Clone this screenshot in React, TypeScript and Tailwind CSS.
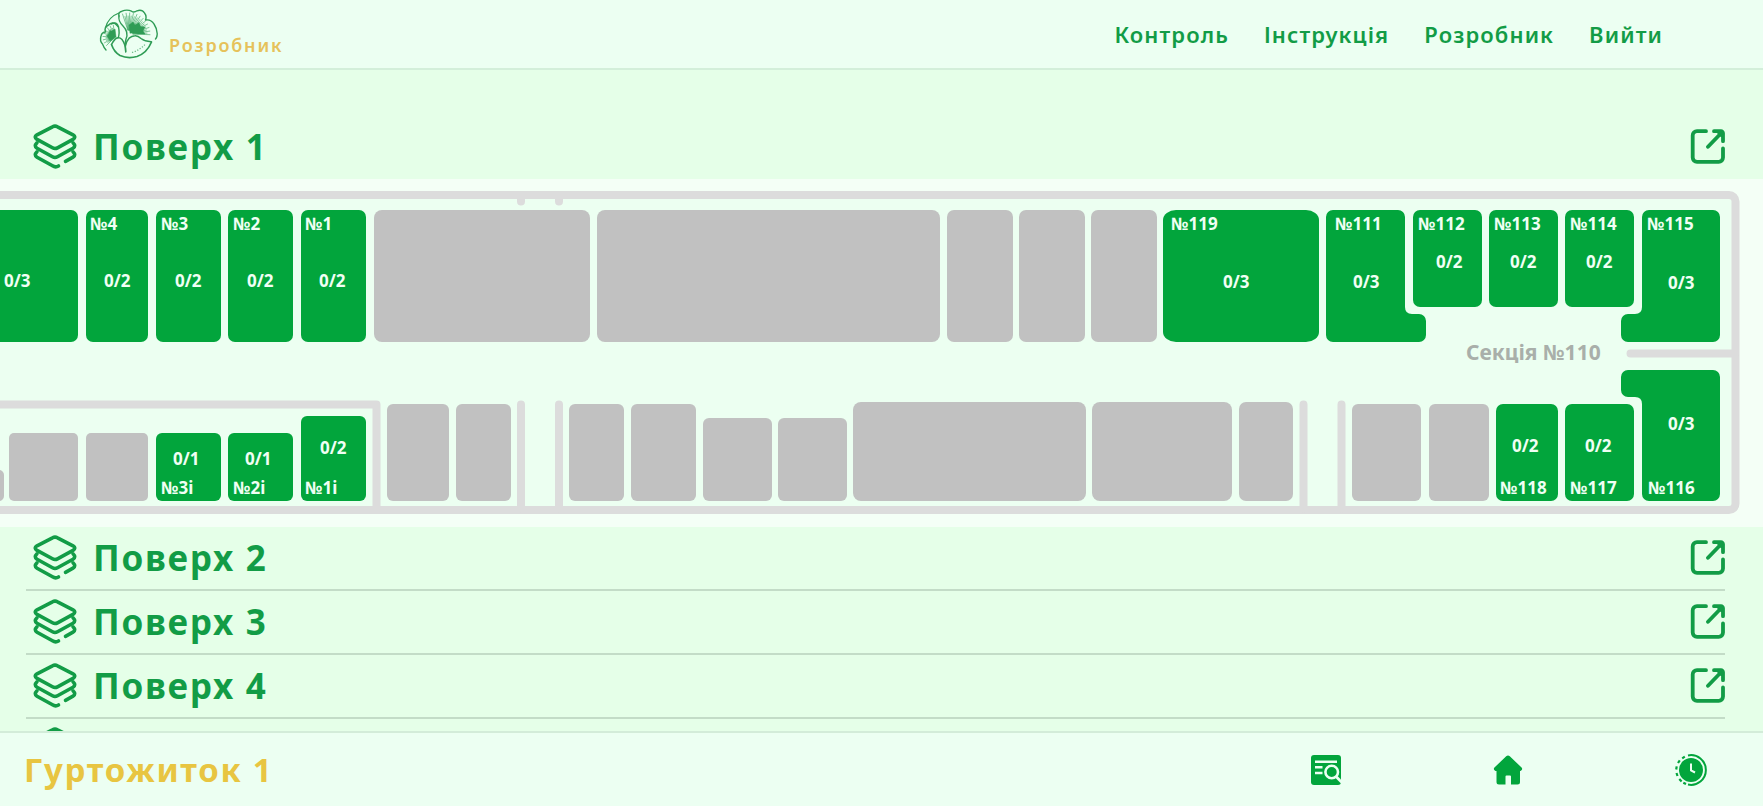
import React from "react";

type Room = { x: number; y: number; w: number; h: number; rx?: number };
type LabeledRoom = {
  name: string;
  places: string;
  shape: string;
  nameX: number;
  nameY: number;
  placesX: number;
  placesY: number;
  nameHidden?: boolean;
};

const box = (x: number, y: number, w: number, h: number, rx = 7, ry = 7) =>
  `M${x + rx} ${y}h${w - 2 * rx}a${rx} ${ry} 0 0 1 ${rx} ${ry}v${h - 2 * ry}a${rx} ${ry} 0 0 1 -${rx} ${ry}h-${w - 2 * rx}a${rx} ${ry} 0 0 1 -${rx} -${ry}v-${h - 2 * ry}a${rx} ${ry} 0 0 1 ${rx} -${ry}z`;

const serviceRooms: Room[] = [
  { x: 374, y: 209, w: 216, h: 132, rx: 8 },
  { x: 597, y: 209, w: 343, h: 132, rx: 8 },
  { x: 947, y: 209, w: 66, h: 132 },
  { x: 1019, y: 209, w: 66, h: 132 },
  { x: 1091, y: 209, w: 66, h: 132 },
  { x: -60, y: 469, w: 64, h: 31, rx: 5 },
  { x: 9, y: 432, w: 69, h: 68, rx: 5 },
  { x: 86, y: 432, w: 62, h: 68, rx: 5 },
  { x: 387, y: 403, w: 62, h: 97, rx: 6 },
  { x: 456, y: 403, w: 55, h: 97, rx: 6 },
  { x: 569, y: 403, w: 55, h: 97, rx: 6 },
  { x: 631, y: 403, w: 65, h: 97, rx: 6 },
  { x: 703, y: 417, w: 69, h: 83, rx: 6 },
  { x: 778, y: 417, w: 69, h: 83, rx: 6 },
  { x: 853, y: 401, w: 233, h: 99, rx: 8 },
  { x: 1092, y: 401, w: 140, h: 99, rx: 8 },
  { x: 1239, y: 401, w: 54, h: 99, rx: 7 },
  { x: 1352, y: 403, w: 69, h: 97, rx: 6 },
  { x: 1429, y: 403, w: 60, h: 97, rx: 6 },
];

const rooms: LabeledRoom[] = [
  { name: "№5", places: "0/3", shape: box(-60, 209, 138, 132), nameX: -54, nameY: 229, placesX: 4, placesY: 286, nameHidden: true },
  { name: "№4", places: "0/2", shape: box(86, 209, 62, 132), nameX: 90, nameY: 229, placesX: 104, placesY: 286 },
  { name: "№3", places: "0/2", shape: box(156, 209, 65, 132), nameX: 161, nameY: 229, placesX: 175, placesY: 286 },
  { name: "№2", places: "0/2", shape: box(228, 209, 65, 132), nameX: 233, nameY: 229, placesX: 247, placesY: 286 },
  { name: "№1", places: "0/2", shape: box(301, 209, 65, 132), nameX: 305, nameY: 229, placesX: 319, placesY: 286 },
  { name: "№3i", places: "0/1", shape: box(156, 432, 65, 68, 6, 6), nameX: 161, nameY: 493, placesX: 173, placesY: 464 },
  { name: "№2i", places: "0/1", shape: box(228, 432, 65, 68, 6, 6), nameX: 233, nameY: 493, placesX: 245, placesY: 464 },
  { name: "№1i", places: "0/2", shape: box(301, 415, 65, 85, 6, 6), nameX: 305, nameY: 493, placesX: 320, placesY: 453 },
  { name: "№119", places: "0/3", shape: box(1163, 209, 156, 132, 13, 10), nameX: 1171, nameY: 229, placesX: 1223, placesY: 287 },
  {
    name: "№111",
    places: "0/3",
    shape:
      "M1333 209H1398a7 7 0 0 1 7 7V306q0 7 7 7H1419a7 7 0 0 1 7 7V334a7 7 0 0 1 -7 7H1333a7 7 0 0 1 -7 -7V216a7 7 0 0 1 7 -7z",
    nameX: 1335,
    nameY: 229,
    placesX: 1353,
    placesY: 287,
  },
  { name: "№112", places: "0/2", shape: box(1413, 209, 69, 97), nameX: 1418, nameY: 229, placesX: 1436, placesY: 267 },
  { name: "№113", places: "0/2", shape: box(1489, 209, 69, 97), nameX: 1494, nameY: 229, placesX: 1510, placesY: 267 },
  { name: "№114", places: "0/2", shape: box(1565, 209, 69, 97), nameX: 1570, nameY: 229, placesX: 1586, placesY: 267 },
  {
    name: "№115",
    places: "0/3",
    shape:
      "M1649 209H1713a7 7 0 0 1 7 7V334a7 7 0 0 1 -7 7H1628a7 7 0 0 1 -7 -7V320a7 7 0 0 1 7 -7H1635q7 0 7 -7V216a7 7 0 0 1 7 -7z",
    nameX: 1647,
    nameY: 229,
    placesX: 1668,
    placesY: 288,
  },
  {
    name: "№116",
    places: "0/3",
    shape:
      "M1628 369H1713a7 7 0 0 1 7 7V493a7 7 0 0 1 -7 7H1649a7 7 0 0 1 -7 -7V403q0 -7 -7 -7H1628a7 7 0 0 1 -7 -7V376a7 7 0 0 1 7 -7z",
    nameX: 1648,
    nameY: 493,
    placesX: 1668,
    placesY: 429,
  },
  { name: "№117", places: "0/2", shape: box(1565, 403, 69, 97), nameX: 1570, nameY: 493, placesX: 1585, placesY: 451 },
  { name: "№118", places: "0/2", shape: box(1496, 403, 62, 97), nameX: 1500, nameY: 493, placesX: 1512, placesY: 451 },
];

function FloorPlan() {
  return (
    <div className="flex justify-end overflow-hidden bg-[#f4fff6]">
      <svg
        viewBox="0 178 1763 348"
        className="h-[348px] w-[1763px] shrink-0 overflow-visible"
        role="group"
        aria-label="План поверху 1"
      >
        <path d="M-100 194.5H1729a6.5 6.5 0 0 1 6.5 6.5V503a6.5 6.5 0 0 1 -6.5 6.5H-100z" fill="#ecfff1" />
        <g fill="none" stroke="#dcdcdc" strokeWidth="8">
          <path d="M-100 194H1729a6.5 6.5 0 0 1 6.5 6.5V502.500a6.5 6.5 0 0 1 -6.5 6.5H-100" />
          <path d="M-100 403.500H376.500V508" strokeLinejoin="round" />
          <path
            d="M521 508V403.500M559 508V403.500M1303.500 508V403.500M1341.500 508V403.500M1630.500 352.500H1735M521 196V200.500M559 196V200.500"
            strokeLinecap="round"
          />
        </g>
        {serviceRooms.map((r) => (
          <rect key={`${r.x}-${r.y}`} x={r.x} y={r.y} width={r.w} height={r.h} rx={r.rx ?? 7} fill="#c1c1c1" />
        ))}
        {rooms.map((r) => (
          <a key={r.name} href={`#room-${r.name}`} aria-label={`Кімната ${r.name}`}>
            <path d={r.shape} fill="#02a53c" />
            {!r.nameHidden && (
              <text x={r.nameX} y={r.nameY} className="fill-[#f0fff4] text-[17px] font-bold">
                {r.name}
              </text>
            )}
            <text x={r.placesX} y={r.placesY} className="fill-[#f0fff4] text-[17px] font-bold">
              {r.places}
            </text>
          </a>
        ))}
        <text x="1466" y="359" className="fill-[#a9afaa] text-[21px] font-bold">
          Секція №110
        </text>
      </svg>
    </div>
  );
}

function LayersIcon() {
  return (
    <svg
      viewBox="0 0 44 46"
      className="h-[46px] w-[44px]"
      fill="none"
      stroke="currentColor"
      strokeWidth="3.6"
      strokeLinecap="round"
      strokeLinejoin="round"
      aria-hidden="true"
    >
      <path d="M19.500 2.800q2.500-1.400 5 0L40 10.800q3.600 2.300 0 4.600L24.500 23.800q-2.500 1.400-5 0L4 15.400q-3.600-2.300 0-4.600z" />
      <path d="M4 18.800q-3.400 3.400 0 5.400L19.500 32.800q2.500 1.400 5 0L40 24.200q3.400-2 0-5.400" />
      <path d="M4 27.800q-3.400 3.400 0 5.400L19.500 41.800q3 2 6 .2M32.500 37.300L40 33.200q3.400-2 0-5.400" />
    </svg>
  );
}

function OpenIcon() {
  return (
    <svg
      viewBox="0 0 36 36"
      className="size-9"
      fill="none"
      stroke="currentColor"
      strokeWidth="3.8"
      strokeLinecap="round"
      strokeLinejoin="round"
      aria-hidden="true"
    >
      <path d="M17 2.200H8a4.300 4.300 0 0 0-4.300 4.300V28.500a4.300 4.300 0 0 0 4.300 4.300H29.700a4.300 4.300 0 0 0 4.300-4.300V19.500" />
      <path d="M25 2.200H32a2 2 0 0 1 2 2V12.200M33 3.200L19 17.800M29.500 3L33.500 7" />
    </svg>
  );
}

function Floor({ number, divided = true, children }: { number: number; divided?: boolean; children?: React.ReactNode }) {
  return (
    <section>
      <div className="pr-[38px] pl-[26px]">
        <div
          className={`flex h-16 items-center justify-between pl-[7px] ${divided ? "border-b-2 border-[#c3dcc7]" : ""}`}
        >
          <button type="button" className="flex items-center gap-4 text-[35px] leading-[48px] font-bold tracking-wider">
            <LayersIcon />
            <span>Поверх {number}</span>
          </button>
          <a href={`#floor-${number}`} aria-label={`Відкрити поверх ${number}`}>
            <OpenIcon />
          </a>
        </div>
      </div>
      {children}
    </section>
  );
}

const fan = (cx: number, cy: number, from: number, to: number, count: number, inner: number, outer: number) =>
  Array.from({ length: count }, (_, i) => {
    const a = ((from + ((to - from) * i) / (count - 1)) * Math.PI) / 180;
    const r = outer - (i % 2) * 3;
    return `M${(cx + inner * Math.cos(a)).toFixed(1)} ${(cy + inner * Math.sin(a)).toFixed(1)}L${(cx + r * Math.cos(a)).toFixed(1)} ${(cy + r * Math.sin(a)).toFixed(1)}`;
  }).join("");

function Logo() {
  return (
    <svg
      viewBox="0 0 60 52"
      className="h-[52px] w-[60px] text-[#2f9c55]"
      fill="none"
      stroke="currentColor"
      strokeWidth="1.4"
      strokeLinecap="round"
      strokeLinejoin="round"
      aria-hidden="true"
    >
      <path d="M21 5Q10 9 7.500 20" strokeWidth="1.2" />
      <path d="M21 8Q20 4 24 3.200Q29 1 33.500 3.200Q36 5 39 2.800Q44 1 46.500 5Q49 8 47.500 12Q53 11 56 16Q60 22 59 28Q58.500 30 57.500 31" />
      <path d="M8 42Q6 40 4.500 36Q1.500 33 3 28Q4 24 7.500 24Q6 19 10 17.500Q13 14 17 15.500L20.500 19" />
      <path d="M13 16Q19 13 20.500 19Q22 26 20 30M21 8Q20 13 25 18Q31 24 28 31Q27 34 27.700 44" />
      <path d="M13.500 36.500Q19 26 24 31.500Q27.500 36 27.700 43.500M27.700 37Q30 28 37 27.700Q40 27.500 43 30.500Q47 33.500 53 33.700" />
      <path d="M13.500 36.500Q16 44 22 47.500Q30 51 39 48.500Q49 45 53.500 34" strokeWidth="1.7" />
      <path d="M34 44.500Q42 42 47 36.500" stroke="#6fbb88" strokeWidth="1.3" strokeDasharray="1.2 1.6" strokeLinecap="butt" />
      <path d={fan(31, 26, -108, 2, 23, 4, 21)} strokeWidth=".6" />
      <path d="M32 25L31 17L35 14L37 17L41 14.500L42.500 18.500L47 19L45 23L47 26L40 26L36 25z" fill="currentColor" strokeWidth=".5" />
      <path d={fan(17, 29, 135, 262, 17, 2, 12)} strokeWidth=".6" />
      <path d="M18 29L17 21L13.500 23L12 22.500L10.500 26L9 28L11 31L12 33z" fill="currentColor" strokeWidth=".5" />
    </svg>
  );
}

function ReportIcon() {
  return (
    <svg viewBox="0 0 30 30" className="size-[30px]" fill="none" stroke="#ecfff2" aria-hidden="true">
      <rect width="30" height="30" rx="3" fill="#02a53c" stroke="none" />
      <path d="M4 6.700H26M4 12.300H11.500M4 18H11.500" strokeWidth="2.6" />
      <circle cx="20.7" cy="17" r="6.3" strokeWidth="2.6" fill="#02a53c" />
      <path d="M25 21.500L31 27.500" strokeWidth="2.8" />
    </svg>
  );
}

function HomeIcon() {
  return (
    <svg viewBox="0 0 30 30" className="size-[30px]" fill="#02a53c" aria-hidden="true">
      <path d="M13.200 1.200q1.800-1.500 3.600 0L28.800 12.800q1.200 2.200-1.300 3.200H27V27q0 2.500-2.500 2.500H18V21.500q0-1-1-1H13.500q-1 0-1 1V29.500H6q-2.500 0-2.500-2.500V16H2.500Q0 15 1.200 12.800z" />
    </svg>
  );
}

function ClockIcon() {
  return (
    <svg viewBox="0 0 32 32" className="size-8" fill="none" stroke="#02a53c" strokeWidth="2" aria-hidden="true">
      <circle cx="16" cy="16" r="12" fill="#02a53c" stroke="none" />
      <path d="M13 1.400A14.900 14.900 0 1 1 13 30.600" />
      <path
        d="M9.800 2.700L7.200 4.400M4.800 6.300L3 9M1.700 12.300L1.200 15.500M1.500 19L2.500 22M4.300 25L6.600 27.500M8.300 28.700L11 30"
        strokeWidth="2.2"
      />
      <path d="M16 9.500V16.500L20 18.500" stroke="#ecfff2" strokeWidth="2" />
    </svg>
  );
}

export default function App() {
  return (
    <div className="flex h-screen flex-col overflow-hidden bg-[#e5ffe8] font-['Noto_Sans','Open_Sans',sans-serif] text-[#129c46]">
      <header className="flex h-[70px] shrink-0 items-center justify-between border-b-2 border-[#d3efda] bg-[#ecfff2] pr-[100px] pl-[98px]">
        <a href="#home" className="flex items-center gap-[11px]">
          <Logo />
          <span className="pt-[22px] text-[18px] leading-6 font-semibold tracking-widest text-[#e6c25a]">Розробник</span>
        </a>
        <nav className="flex gap-[35px] text-[22px] font-semibold tracking-wider">
          <a href="#control">Контроль</a>
          <a href="#guide">Інструкція</a>
          <a href="#developer">Розробник</a>
          <a href="#logout">Вийти</a>
        </nav>
      </header>
      <main className="min-h-0 flex-1 overflow-y-auto pt-[45px] [scrollbar-width:none]">
        <Floor number={1} divided={false}>
          <FloorPlan />
        </Floor>
        <Floor number={2} />
        <Floor number={3} />
        <Floor number={4} />
        <Floor number={5} />
      </main>
      <footer className="flex h-[75px] shrink-0 items-center justify-between border-t-2 border-[#d3ecd9] bg-[#ecfff2] pr-14 pl-6">
        <h1 className="text-[33px] leading-10 font-bold tracking-wider text-[#e8c541]">Гуртожиток 1</h1>
        <nav className="flex items-center gap-[152px]">
          <a href="#report" aria-label="Звіт">
            <ReportIcon />
          </a>
          <a href="#main" aria-label="Головна">
            <HomeIcon />
          </a>
          <a href="#history" aria-label="Історія">
            <ClockIcon />
          </a>
        </nav>
      </footer>
    </div>
  );
}
